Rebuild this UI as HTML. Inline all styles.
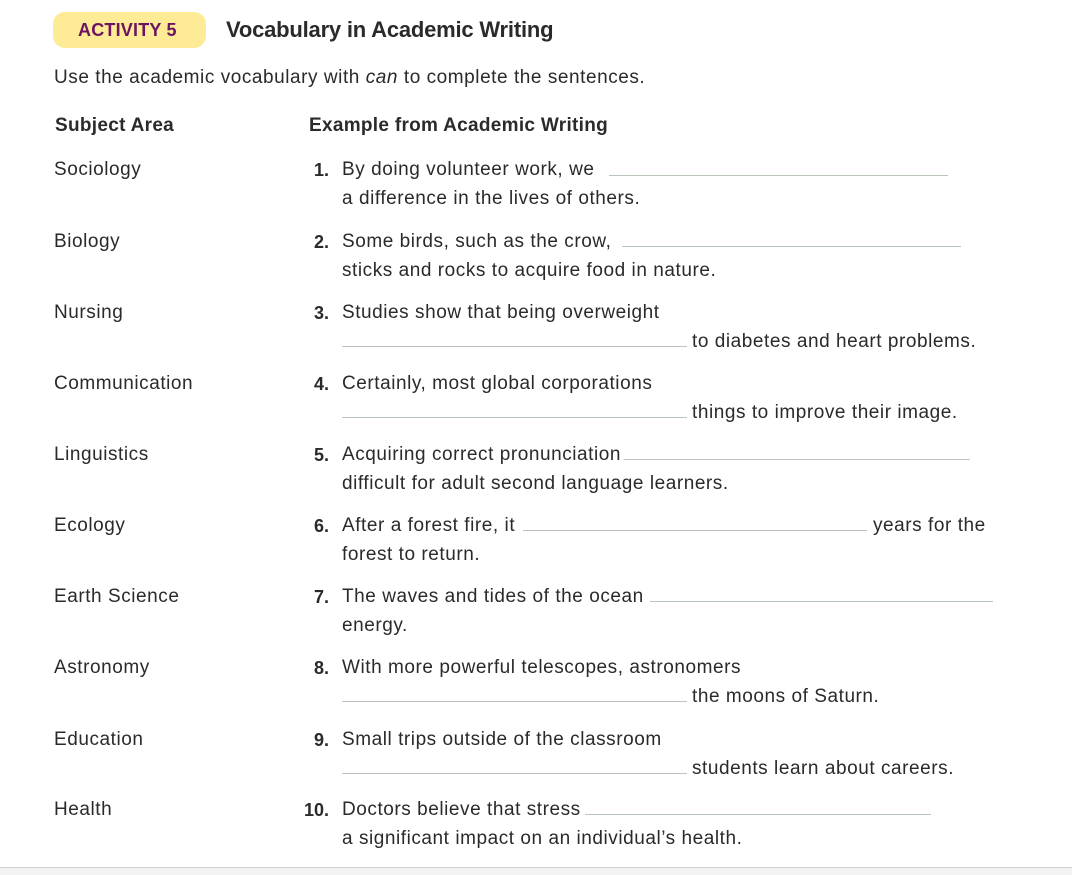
<!DOCTYPE html>
<html><head><meta charset="utf-8"><style>
body{margin:0;width:1072px;height:874px;background:#fff;position:relative;overflow:hidden;font-family:"Liberation Sans",Arial,sans-serif;color:#2a2a2a;}
.a{position:absolute;white-space:nowrap;font-size:19px;line-height:26px;letter-spacing:0.55px;}
.n{position:absolute;width:40px;text-align:right;font-weight:bold;font-size:18px;line-height:26px;left:289px;}
.l{position:absolute;height:0;border-top:1.5px solid #b9c6b9;}
.b{font-weight:bold;}
</style></head><body>
<div style="position:absolute;left:53px;top:12px;width:153px;height:36px;background:#fdeb96;border-radius:12px;"></div>
<div class="a b" style="left:78px;top:17px;color:#6b1460;font-size:18px;letter-spacing:0.2px;">ACTIVITY 5</div>
<div class="a b" style="left:226px;top:16px;font-size:22px;line-height:28px;letter-spacing:-0.2px;">Vocabulary in Academic Writing</div>
<div class="a" style="left:54px;top:65px;">Use the academic vocabulary with <i>can</i> to complete the sentences.</div>
<div class="a b" style="left:55px;top:113px;letter-spacing:0.3px;">Subject Area</div>
<div class="a b" style="left:309px;top:113px;letter-spacing:0.3px;">Example from Academic Writing</div>

<div class="a" style="left:54px;top:157px">Sociology</div>
<div class="n" style="top:157px">1.</div>
<div class="a" style="left:342px;top:157px">By doing volunteer work, we</div>
<div class="l" style="left:609px;width:339px;top:175px"></div>
<div class="a" style="left:342px;top:186px">a difference in the lives of others.</div>

<div class="a" style="left:54px;top:229px">Biology</div>
<div class="n" style="top:229px">2.</div>
<div class="a" style="left:342px;top:229px">Some birds, such as the crow,</div>
<div class="l" style="left:622px;width:339px;top:246px"></div>
<div class="a" style="left:342px;top:258px">sticks and rocks to acquire food in nature.</div>

<div class="a" style="left:54px;top:300px">Nursing</div>
<div class="n" style="top:300px">3.</div>
<div class="a" style="left:342px;top:300px">Studies show that being overweight</div>
<div class="l" style="left:342px;width:345px;top:346px"></div>
<div class="a" style="left:692px;top:329px">to diabetes and heart problems.</div>

<div class="a" style="left:54px;top:371px">Communication</div>
<div class="n" style="top:371px">4.</div>
<div class="a" style="left:342px;top:371px">Certainly, most global corporations</div>
<div class="l" style="left:342px;width:345px;top:417px"></div>
<div class="a" style="left:692px;top:400px">things to improve their image.</div>

<div class="a" style="left:54px;top:442px">Linguistics</div>
<div class="n" style="top:442px">5.</div>
<div class="a" style="left:342px;top:442px">Acquiring correct pronunciation</div>
<div class="l" style="left:624px;width:346px;top:459px"></div>
<div class="a" style="left:342px;top:471px">difficult for adult second language learners.</div>

<div class="a" style="left:54px;top:513px">Ecology</div>
<div class="n" style="top:513px">6.</div>
<div class="a" style="left:342px;top:513px">After a forest fire, it</div>
<div class="l" style="left:523px;width:344px;top:530px"></div>
<div class="a" style="left:873px;top:513px">years for the</div>
<div class="a" style="left:342px;top:542px">forest to return.</div>

<div class="a" style="left:54px;top:584px">Earth Science</div>
<div class="n" style="top:584px">7.</div>
<div class="a" style="left:342px;top:584px">The waves and tides of the ocean</div>
<div class="l" style="left:650px;width:343px;top:601px"></div>
<div class="a" style="left:342px;top:613px">energy.</div>

<div class="a" style="left:54px;top:655px">Astronomy</div>
<div class="n" style="top:655px">8.</div>
<div class="a" style="left:342px;top:655px">With more powerful telescopes, astronomers</div>
<div class="l" style="left:342px;width:345px;top:701px"></div>
<div class="a" style="left:692px;top:684px">the moons of Saturn.</div>

<div class="a" style="left:54px;top:727px">Education</div>
<div class="n" style="top:727px">9.</div>
<div class="a" style="left:342px;top:727px">Small trips outside of the classroom</div>
<div class="l" style="left:342px;width:345px;top:773px"></div>
<div class="a" style="left:692px;top:756px">students learn about careers.</div>

<div class="a" style="left:54px;top:797px">Health</div>
<div class="n" style="top:797px">10.</div>
<div class="a" style="left:342px;top:797px">Doctors believe that stress</div>
<div class="l" style="left:585px;width:346px;top:814px"></div>
<div class="a" style="left:342px;top:826px">a significant impact on an individual’s health.</div>

<div style="position:absolute;left:0;top:867px;width:1072px;height:7px;background:#f3f3f3;border-top:1px solid #d0d0d0;"></div>
</body></html>
